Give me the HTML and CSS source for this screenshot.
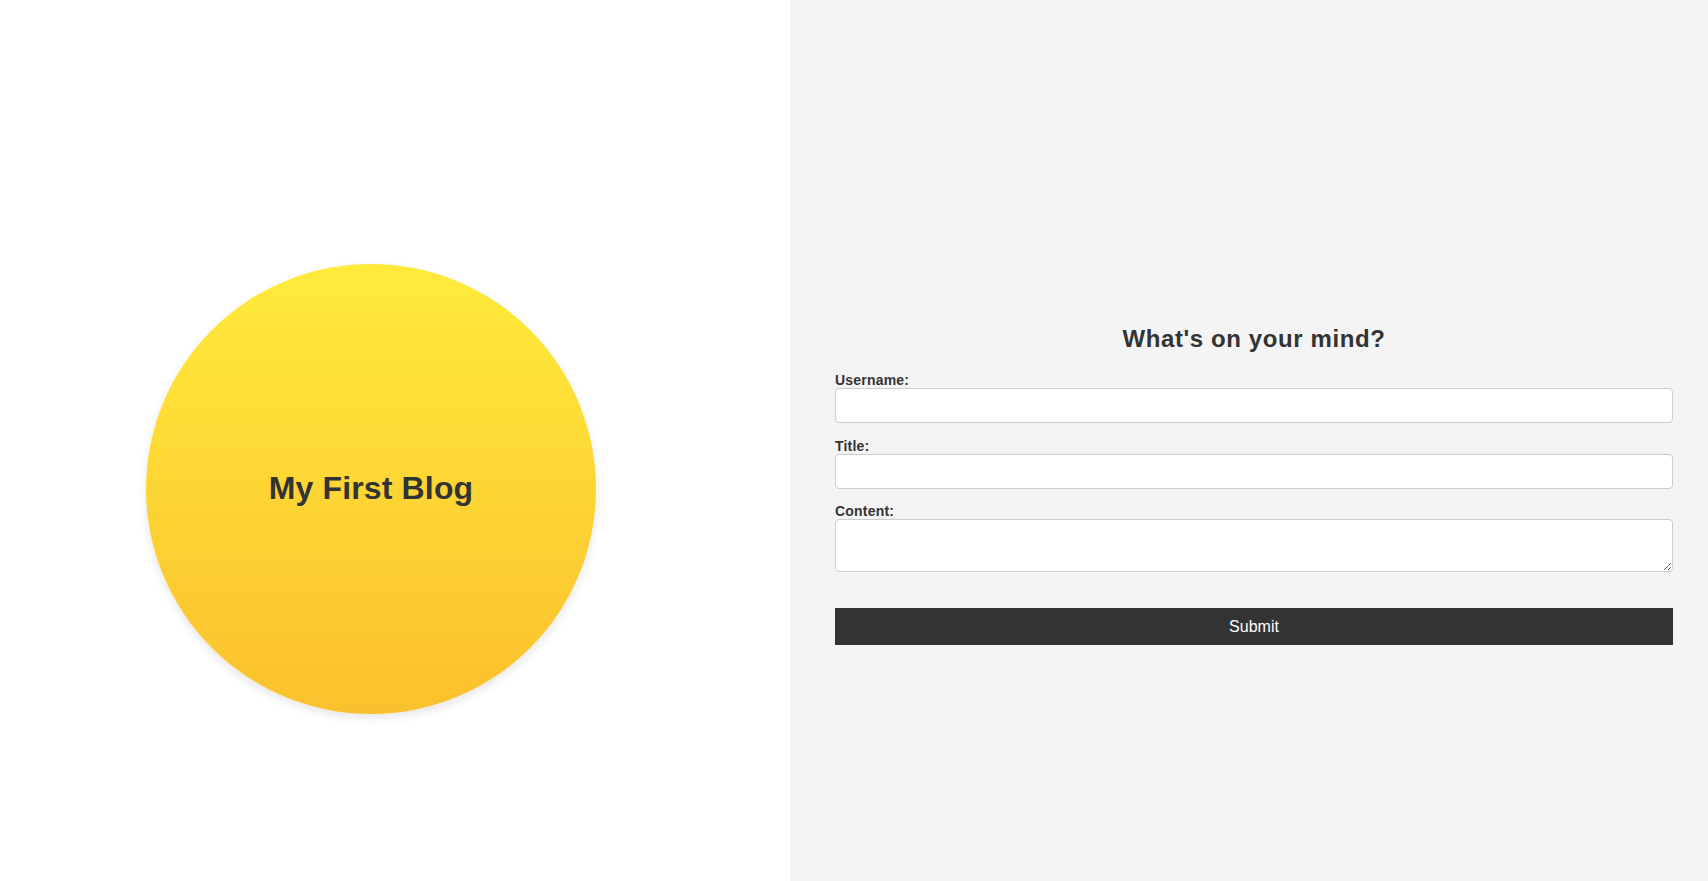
FILE: index.html
```html
<!DOCTYPE html>
<html lang="en">
<head>
<meta charset="utf-8">
<title>My First Blog</title>
<link rel="stylesheet" href="styles.css">
</head>
<body>
<div class="page">
  <section class="left">
    <div class="circle"><h1 class="blog-title">My First Blog</h1></div>
  </section>
  <section class="right">
    <form class="post-form">
      <h2 class="form-title">What's on your mind?</h2>
      <label class="field-label" for="username">Username:</label>
      <input class="field-input" id="username" type="text">
      <label class="field-label" for="title">Title:</label>
      <input class="field-input field-last" id="title" type="text">
      <label class="field-label" for="content">Content:</label>
      <textarea class="field-area" id="content"></textarea>
      <button class="submit-btn" type="button">Submit</button>
    </form>
  </section>
</div>
</body>
</html>
```
FILE: styles.css
```css
* { box-sizing: border-box; }
html, body { margin: 0; padding: 0; }
body {
  font-family: "Liberation Sans", Arial, sans-serif;
  color: #333;
}
.page {
  display: flex;
  height: 881px;
  overflow: hidden;
}
.left {
  width: 790px;
  flex: none;
  background: #fff;
  display: flex;
  align-items: center;
  justify-content: center;
  padding: 96px 48px 0 0;
}
.circle {
  width: 450px;
  height: 450px;
  border-radius: 50%;
  background: linear-gradient(to bottom, #ffeb3b, #fbc02d);
  box-shadow: 0 4px 10px rgba(0, 0, 0, 0.1);
  display: flex;
  align-items: center;
  justify-content: center;
}
.blog-title {
  margin: 0;
  font-size: 32px;
  font-weight: bold;
  letter-spacing: 0.15px;
  color: #333;
}
.right {
  flex: 1;
  background: #f4f4f4;
  padding: 306px 35px 0 45px;
}
.post-form {
  display: flex;
  flex-direction: column;
}
.form-title {
  font-size: 24px;
  font-weight: bold;
  text-align: center;
  margin: 0 0 19px;
  line-height: 28px;
  padding-top: 19px;
  letter-spacing: 0.6px;
  color: #333;
}
.field-label {
  display: block;
  font-size: 14px;
  font-weight: bold;
  line-height: 16px;
  letter-spacing: 0.2px;
  color: #333;
}
.field-input, .field-area {
  display: block;
  width: 100%;
  height: 35px;
  border: 1px solid #ccc;
  border-radius: 4px;
  background: #fff;
  padding: 8px;
  font-family: inherit;
  font-size: 16px;
  margin: 0 0 15px;
}
.field-last {
  margin-bottom: 14px;
}
.field-area {
  height: 53px;
  resize: vertical;
  margin-bottom: 36px;
}
.submit-btn {
  display: block;
  width: 100%;
  height: 37px;
  border: none;
  background: #333;
  color: #fff;
  font-family: inherit;
  font-size: 16px;
  cursor: pointer;
}
```
